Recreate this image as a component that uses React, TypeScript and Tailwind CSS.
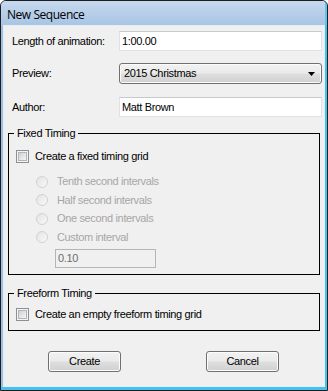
const sans = "font-['Liberation_Sans',Arial,sans-serif]";

function TextBox({ value }: { value: string }) {
  return (
    <div className="w-[203px] h-[20px] bg-white border border-[#dfe3e8] border-t-[#c5cad1] flex items-center pl-[2px] text-black">
      {value}
    </div>
  );
}

function ComboBox({ value }: { value: string }) {
  return (
    <div className="w-[203px] h-[21px] rounded-[3px] border border-[#707070] bg-[linear-gradient(#f2f2f2_0%,#ebebeb_45%,#dedede_55%,#d0d0d0_100%)] shadow-[inset_0_0_0_1px_#fbfbfb] flex items-center justify-between pl-[4px] pr-[6px] text-black">
      <span>{value}</span>
      <svg width="7" height="4" viewBox="0 0 7 4">
        <path d="M0 0H7L3.5 4Z" fill="#000" />
      </svg>
    </div>
  );
}

function CheckBox({ label }: { label: string }) {
  return (
    <div className="flex items-center h-[13px]">
      <span className="w-[13px] h-[13px] border border-[#8e8f8f] bg-[#f4f4f4] p-[1px] shrink-0">
        <span className="block w-full h-full border border-[#b2b6bb] bg-gradient-to-br from-[#cdd0d4] to-[#f7f7f7]" />
      </span>
      <span className="ml-[6px] text-black">{label}</span>
    </div>
  );
}

function Radio({ label, tall }: { label: string; tall?: boolean }) {
  return (
    <div className={tall ? "flex items-center h-[19px]" : "flex items-center h-[18px]"}>
      <span className="w-[12px] h-[12px] rounded-full border border-[#d2d2d2] bg-gradient-to-br from-[#e4e4e4] to-[#f8f8f8] shrink-0" />
      <span className="ml-[9px] text-[#a6a6a6]">{label}</span>
    </div>
  );
}

function Button({ label }: { label: string }) {
  return (
    <div className="w-[73px] h-[21px] rounded-[3px] border border-[#707070] bg-[linear-gradient(#f2f2f2_0%,#ebebeb_45%,#dedede_55%,#d0d0d0_100%)] shadow-[inset_0_0_0_1px_#fcfcfc] flex items-center justify-center text-black">
      {label}
    </div>
  );
}

export default function App() {
  return (
    <div className={`w-[328px] h-[391px] ${sans} text-[11px] leading-[13px] tracking-[-0.35px]`}>
      <div className="w-full h-full flex flex-col border border-[#1d1d1d] rounded-t-[6px] overflow-hidden bg-[#9ec0e3] shadow-[inset_-2px_-3px_0_#43c2ec]">
        <div className="h-[24px] shrink-0 flex items-center pl-[6px] pt-[2px] bg-gradient-to-b from-[#c6d9ee] to-[#a8c5e4] border-r-2 border-[#5cc8ee] font-['Open_Sans','Noto_Sans',sans-serif] text-[12px] tracking-[-0.45px] text-black">
          New Sequence
        </div>
        <div className="flex-1 mx-[2px] mb-[3px] border border-[#e4ecf5] bg-[#f0f0f0] flex flex-col pt-[5px]">
          <div className="flex items-center pl-[8px]">
            <span className="w-[107px] text-black">Length of animation:</span>
            <TextBox value="1:00.00" />
          </div>
          <div className="flex items-center pl-[8px] mt-[12px]">
            <span className="w-[107px] text-black">Preview:</span>
            <ComboBox value="2015 Christmas" />
          </div>
          <div className="flex items-center pl-[8px] mt-[13px]">
            <span className="w-[107px] text-black">Author:</span>
            <TextBox value="Matt Brown" />
          </div>

          <fieldset className="mx-[4px] mt-[10px] border border-black pl-[7px] pb-[6px]">
            <legend className="ml-[-2px] px-[3px] text-black">Fixed Timing</legend>
            <div className="mt-[10px]">
              <CheckBox label="Create a fixed timing grid" />
            </div>
            <div className="mt-[9px] pl-[20px] flex flex-col">
              <Radio label="Tenth second intervals" tall />
              <Radio label="Half second intervals" />
              <Radio label="One second intervals" tall />
              <Radio label="Custom interval" />
            </div>
            <div className="mt-[3px] ml-[39px] w-[101px] h-[19px] border border-[#b5b5b5] bg-[#f0f0f0] flex items-center pl-[2px] text-[#6d6d6d]">
              0.10
            </div>
          </fieldset>

          <fieldset className="mx-[4px] mt-[12px] border border-black pl-[7px] pb-[9px]">
            <legend className="ml-[-2px] px-[3px] text-black">Freeform Timing</legend>
            <div className="mt-[8px]">
              <CheckBox label="Create an empty freeform timing grid" />
            </div>
          </fieldset>

          <div className="mt-[20px] pl-[44px] flex gap-[85px]">
            <Button label="Create" />
            <Button label="Cancel" />
          </div>
        </div>
      </div>
    </div>
  );
}
